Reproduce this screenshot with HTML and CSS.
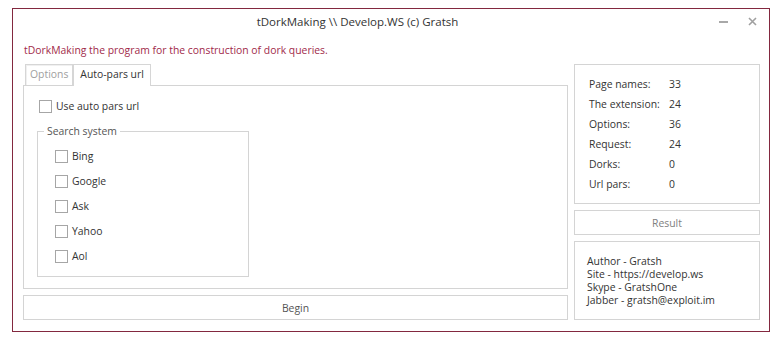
FILE: index.html
```html
<!DOCTYPE html>
<html lang="en">
<head>
    <meta charset="UTF-8">
    <title>tDorkMaking</title>
    <link rel="stylesheet" href="styles.css">
</head>
<body>
    <div class="window">
        <div class="titlebar">
            <div class="title">tDorkMaking \\ Develop.WS (c) Gratsh</div>
            <div class="controls">
                <span class="btn-min"></span>
                <svg class="btn-close" width="9" height="9" viewBox="0 0 9 9">
                    <path d="M1 1 L8 8 M8 1 L1 8" stroke="#a0a0a0" stroke-width="1.6"/>
                </svg>
            </div>
        </div>

        <div class="subtitle">tDorkMaking the program for the construction of dork queries.</div>

        <div class="main">
            <div class="left">
                <div class="tabs">
                    <div class="tab">Options</div>
                    <div class="tab active">Auto-pars url</div>
                </div>
                <div class="tab-panel">
                    <label class="check top-check"><span class="box"></span>Use auto pars url</label>

                    <fieldset class="group">
                        <legend>Search system</legend>
                        <label class="check"><span class="box"></span>Bing</label>
                        <label class="check"><span class="box"></span>Google</label>
                        <label class="check"><span class="box"></span>Ask</label>
                        <label class="check"><span class="box"></span>Yahoo</label>
                        <label class="check"><span class="box"></span>Aol</label>
                    </fieldset>
                </div>
                <div class="button">Begin</div>
            </div>

            <div class="right">
                <div class="stats">
                    <div class="row"><span class="label">Page names:</span><span>33</span></div>
                    <div class="row"><span class="label">The extension:</span><span>24</span></div>
                    <div class="row"><span class="label">Options:</span><span>36</span></div>
                    <div class="row"><span class="label">Request:</span><span>24</span></div>
                    <div class="row"><span class="label">Dorks:</span><span>0</span></div>
                    <div class="row"><span class="label">Url pars:</span><span>0</span></div>
                </div>
                <div class="button result">Result</div>
                <div class="info">
                    Author - Gratsh<br>
                    Site - https://develop.ws<br>
                    Skype - GratshOne<br>
                    Jabber - gratsh@exploit.im
                </div>
            </div>
        </div>
    </div>
</body>
</html>
```

FILE: styles.css
```css
body {
    margin: 0;
    background: #fff;
    font-family: "Open Sans", "Noto Sans", sans-serif;
    font-size: 10.4px;
    color: #333;
}
.window {
    margin: 8px 10px 0 12px;
    height: 322px;
    border: 1px solid #83283f;
    display: flex;
    flex-direction: column;
}
.titlebar {
    display: flex;
    height: 24px;
    align-items: center;
}
.title {
    flex: 1;
    text-align: center;
    font-size: 11.5px;
    color: #333;
}
.controls {
    width: 67px;
    display: flex;
    align-items: center;
    gap: 20px;
    padding-left: 17px;
    box-sizing: border-box;
}
.btn-min {
    width: 9px;
    height: 2px;
    background: #a8a8a8;
    margin-top: 2px;
}
.subtitle {
    color: #a12a4a;
    padding: 10px 0 0 11px;
    height: 25px;
    box-sizing: border-box;
    line-height: 14px;
}
.main {
    display: flex;
    gap: 6px;
    padding: 6px 9px 0 10px;
}
.left {
    width: 545px;
    display: flex;
    flex-direction: column;
}
.tabs {
    display: flex;
    height: 21px;
    align-items: flex-end;
}
.tab {
    height: 20px;
    line-height: 19px;
    padding: 0 4px;
    border: 1px solid #d6d6d6;
    border-bottom: none;
    color: #a0a0a0;
    box-shadow: inset 1px 1px 0 #f0f0f0;
    margin-left: 2px;
}
.tab.active {
    height: 21px;
    line-height: 19px;
    color: #333;
    padding: 0 6px 0 6px;
    margin-left: 0;
    box-shadow: none;
    background: #fff;
    position: relative;
    top: 1px;
}
.tab-panel {
    border: 1px solid #d4d4d4;
    height: 204px;
    box-sizing: border-box;
    padding: 13px 0 0 15px;
}
.check {
    display: flex;
    align-items: center;
    height: 14px;
}
.box {
    width: 11px;
    height: 11px;
    border: 1px solid #a6a6a6;
    margin-right: 4px;
}
.group {
    margin: 11px 0 0 -2px;
    width: 212px;
    height: 153px;
    box-sizing: border-box;
    border: 1px solid #d4d4d4;
    padding: 11px 0 0 17px;
    display: flex;
    flex-direction: column;
    gap: 11px;
}
.group legend {
    padding: 0 3px;
    margin-left: -11px;
    color: #555;
}
.button {
    margin-top: 6px;
    height: 25px;
    box-sizing: border-box;
    border: 1px solid #d4d4d4;
    text-align: center;
    line-height: 24px;
    color: #555;
}
.right {
    width: 186px;
    display: flex;
    flex-direction: column;
}
.stats {
    border: 1px solid #d4d4d4;
    height: 140px;
    box-sizing: border-box;
    padding: 9px 0 0 14px;
}
.row {
    display: flex;
    height: 20px;
    line-height: 20px;
}
.label {
    width: 80px;
}
.result {
    margin-top: 6px;
    color: #808080;
}
.info {
    margin-top: 6px;
    border: 1px solid #d4d4d4;
    height: 79px;
    box-sizing: border-box;
    padding: 13px 0 0 12px;
    line-height: 13px;
}
```
